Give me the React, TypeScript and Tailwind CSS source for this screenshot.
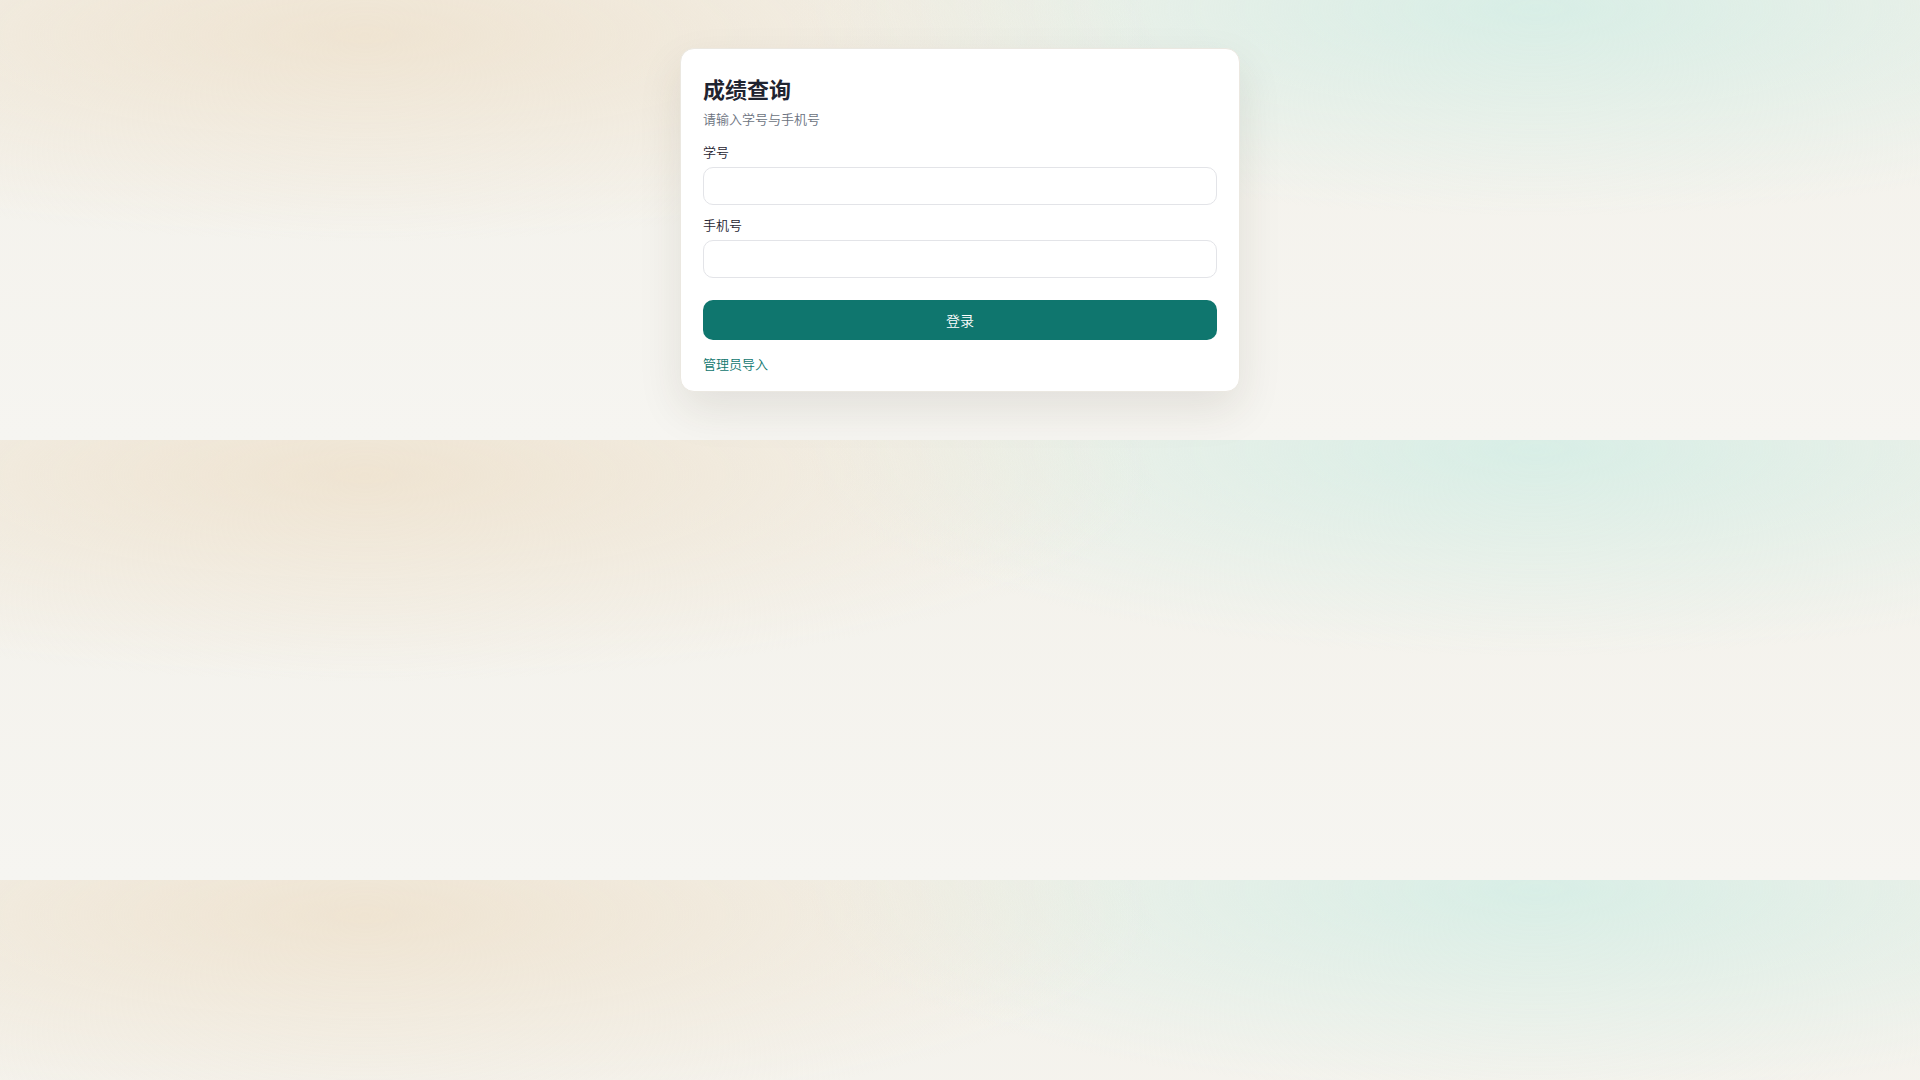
import React from "react";

export default function App() {
  return (
    <div
      className="min-h-screen w-full bg-[#f5f3ee] [background-image:radial-gradient(at_19%_8%,#efe4d2_0%,rgba(239,228,210,0)_36%),radial-gradient(at_80%_2%,#d8eee6_0%,rgba(216,238,230,0)_34%),linear-gradient(180deg,#f3f1ea_0%,#f6f5f1_100%)] [background-size:100%_440px] bg-repeat"
      style={{ fontFamily: '"Noto Sans CJK SC", "Noto Sans", sans-serif' }}
    >
      <div className="flex justify-center pt-12 pb-[50px]">
        <div className="w-[560px] rounded-[14px] border border-[#ebe8e1] bg-white px-[22px] pt-[25px] pb-[17px] shadow-[0_18px_44px_rgba(60,50,30,0.10)]">
          <h1 className="text-[22px] font-bold leading-[28px] text-[#1f2430]">成绩查询</h1>
          <p className="mt-[7px] text-[13px] font-[350] leading-[20px] text-[#6b7280]">请输入学号与手机号</p>

          <div className="mt-[13px]">
            <label className="block text-[13px] font-[350] leading-[20px] text-[#1f2430]">学号</label>
            <input
              type="text"
              className="mt-[5px] block h-[38px] w-full rounded-[10px] border border-[#e3e4e8] bg-white px-3 text-[14px] outline-none"
            />
          </div>

          <div className="mt-[10px]">
            <label className="block text-[13px] font-[350] leading-[20px] text-[#1f2430]">手机号</label>
            <input
              type="text"
              className="mt-[5px] block h-[38px] w-full rounded-[10px] border border-[#e3e4e8] bg-white px-3 text-[14px] outline-none"
            />
          </div>

          <button
            type="button"
            className="mt-[22px] flex h-[40px] w-full items-center justify-center rounded-[10px] bg-[#0f766e] text-[14px] font-[350] text-white"
          >
            登录
          </button>

          <div className="mt-[10px]">
            <a className="text-[13px] font-[350] leading-[20px] text-[#0f766e]" href="#">
              管理员导入
            </a>
          </div>
        </div>
      </div>
    </div>
  );
}
